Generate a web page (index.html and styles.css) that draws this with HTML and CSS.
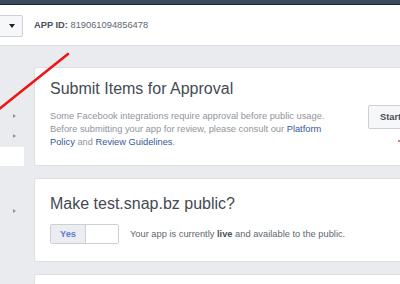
FILE: index.html
```html
<!DOCTYPE html>
<html>
<head>
<meta charset="utf-8">
<link rel="stylesheet" href="styles.css">
</head>
<body>
<div class="topbar"></div>
<header class="header">
  <div class="dropdown"><span class="caret"></span></div>
  <div class="appid"><b>APP ID:</b> 819061094856478</div>
</header>
<div class="main">
  <aside class="sidebar">
    <div class="side-row first"><span class="tri"></span></div>
    <div class="side-row"><span class="tri"></span></div>
    <div class="side-white"></div>
    <div class="side-row third"><span class="tri"></span></div>
  </aside>
  <section class="content">
    <div class="card card-submit">
      <div class="card-text">
        <h2 class="title">Submit Items for Approval</h2>
        <p class="desc">Some Facebook integrations require approval before public usage.<br>Before submitting your app for review, please consult our <a>Platform</a><br><a>Policy</a> and <a>Review Guidelines</a>.</p>
      </div>
      <button class="btn">Start</button>
    </div>
    <div class="card card-public">
      <h2 class="title">Make test.snap.bz public?</h2>
      <div class="toggle-row">
        <div class="toggle"><span class="yes">Yes</span><span class="no"></span></div>
        <span class="status">Your app is currently <b>live</b> and available to the public.</span>
      </div>
    </div>
    <div class="card card-next"></div>
  </section>
</div>
<svg class="annot" width="400" height="284" viewBox="0 0 400 284">
  <path d="M68 54 L-2 110" stroke="#f01414" stroke-width="2.6" stroke-linecap="round" fill="none"/>
  <circle cx="399" cy="141" r="1" fill="#f04040"/>
</svg>
</body>
</html>
```

FILE: styles.css
```css
html, body {
  margin: 0;
  padding: 0;
  overflow: hidden;
}
body {
  width: 400px;
  height: 284px;
  background: #e9ebee;
  font-family: "Liberation Sans", Arial, sans-serif;
  font-size: 9.3px;
  color: #4b4f56;
  position: relative;
}
.topbar {
  height: 4px;
  background: #394a5c;
  border-bottom: 1px solid #1f2831;
}
.header {
  height: 40px;
  background: #fff;
  border-bottom: 1px solid #dcdee3;
  display: flex;
  align-items: center;
}
.dropdown {
  margin-left: -10px;
  width: 33px;
  height: 22px;
  margin-top: 1px;
  box-sizing: border-box;
  border: 1px solid #ced0d4;
  border-radius: 2px;
  background: #f6f7f9;
  display: flex;
  align-items: center;
  justify-content: flex-end;
  padding-right: 7px;
}
.caret {
  width: 0;
  height: 0;
  border-left: 3.5px solid transparent;
  border-right: 3.5px solid transparent;
  border-top: 4px solid #1d2129;
}
.appid {
  margin-left: 11px;
  color: #606770;
  font-size: 9.3px;
}
.appid b {
  font-weight: bold;
  color: #4b4f56;
}
.main {
  display: flex;
}
.sidebar {
  width: 24px;
  flex: 0 0 24px;
  display: flex;
  flex-direction: column;
  padding-top: 60px;
}
.side-row {
  height: 20px;
  display: flex;
  align-items: center;
  padding-left: 13px;
}
.side-row.third {
  margin-top: 35px;
}
.tri {
  width: 0;
  height: 0;
  border-top: 2.5px solid transparent;
  border-bottom: 2.5px solid transparent;
  border-left: 3px solid #8d949e;
}
.side-white {
  margin-top: 1px;
  height: 19px;
  background: #fff;
}
.content {
  padding: 21px 0 0 10px;
  display: flex;
  flex-direction: column;
  gap: 12px;
  width: 440px;
  flex: 0 0 440px;
}
.card {
  background: #fff;
  border: 1px solid #dddfe2;
  border-radius: 3px;
  box-sizing: border-box;
}
.card-submit {
  height: 99px;
  display: flex;
  align-items: flex-start;
  padding: 11px 0 0 15px;
}
.card-text {
  flex: 0 0 318px;
}
.title {
  margin: 0;
  font-size: 16px;
  line-height: 20px;
  font-weight: normal;
  color: #454a52;
}
.desc {
  margin: 11px 0 0;
  font-size: 9.3px;
  line-height: 13px;
  color: #90949c;
}
.desc a {
  color: #365899;
}
.btn {
  align-self: center;
  margin-top: -11px;
  height: 24px;
  padding: 0 20px 0 11px;
  border: 1px solid #ced0d4;
  border-radius: 2px;
  background: #f6f7f9;
  font-family: "Liberation Sans", Arial, sans-serif;
  font-size: 9.3px;
  font-weight: bold;
  color: #4b4f56;
}
.card-public {
  height: 84px;
  padding: 15px 0 0 15px;
}
.toggle-row {
  margin-top: 10px;
  display: flex;
  align-items: center;
}
.toggle {
  width: 69px;
  height: 20px;
  box-sizing: border-box;
  border: 1px solid #ccd0d5;
  border-radius: 2px;
  display: flex;
  overflow: hidden;
}
.yes {
  width: 34px;
  background: #ebedf0;
  border-right: 1px solid #ccd0d5;
  color: #5b7bd5;
  font-weight: bold;
  font-size: 9.3px;
  display: flex;
  align-items: center;
  justify-content: center;
}
.no {
  flex: 1;
  background: #fff;
}
.status {
  margin-left: 11px;
  color: #606770;
  font-size: 9.3px;
}
.status b {
  color: #4b4f56;
}
.card-next {
  height: 40px;
}
.annot {
  position: absolute;
  left: 0;
  top: 0;
  pointer-events: none;
}
```
